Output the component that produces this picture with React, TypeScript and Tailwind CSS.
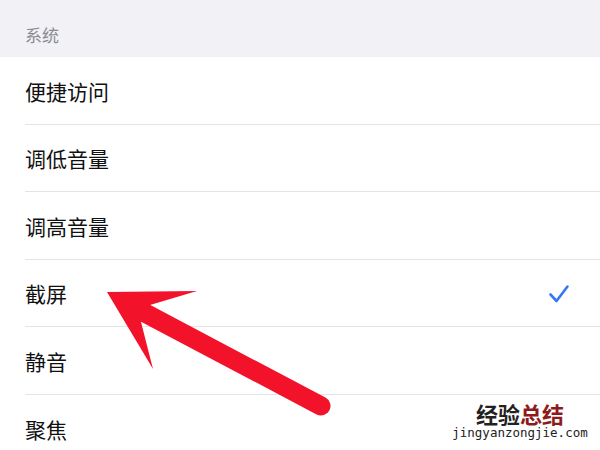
import React from "react";

const rows: { label: string; h: string; check?: boolean }[] = [
  { label: "便捷访问", h: "h-[68px]" },
  { label: "调低音量", h: "h-[67px]" },
  { label: "调高音量", h: "h-[68px]" },
  { label: "截屏", h: "h-[67px]", check: true },
  { label: "静音", h: "h-[68px]" },
  { label: "聚焦", h: "h-[67px]" },
];

export default function App() {
  return (
    <div
      className="relative w-[600px] h-[450px] overflow-hidden bg-white"
      style={{ fontFamily: '"Noto Sans CJK SC", "Noto Sans", sans-serif' }}
    >
      <div className="h-[57px] bg-[#f2f2f6] flex items-end pl-[25px] pb-[12px]">
        <span className="text-[17px] leading-[20px] text-[#8a8a8f]">系统</span>
      </div>
      <div className="flex flex-col">
        {rows.map((r, i) => (
          <div key={r.label} className="pl-[25px]">
            <div
              className={`${r.h} flex items-center justify-between pr-[32px] ${
                i < rows.length - 1 ? "border-b border-[#e4e4e8]" : ""
              }`}
            >
              <span className="text-[21px] leading-[26px] text-[#111]">{r.label}</span>
              {r.check && (
                <svg width="22" height="20" viewBox="0 0 22 20" className="mt-[2px] -mr-[2px]">
                  <path
                    d="M2.5 10.5 L8.5 17 L19.5 2.5"
                    fill="none"
                    stroke="#3478f6"
                    strokeWidth="2.6"
                    strokeLinecap="round"
                    strokeLinejoin="round"
                  />
                </svg>
              )}
            </div>
          </div>
        ))}
      </div>

      <svg
        className="absolute left-0 top-0 pointer-events-none"
        width="600"
        height="450"
        viewBox="0 0 600 450"
      >
        <line
          x1="145"
          y1="313"
          x2="321"
          y2="406"
          stroke="#f2132b"
          strokeWidth="19"
          strokeLinecap="round"
        />
        <polygon
          points="107,292 197,291 150,305 141,322 153,369"
          fill="#f2132b"
        />
      </svg>

      <div className="absolute left-[450px] top-[400px] w-[140px] flex flex-col items-center">
        <div
          className="text-[22px] leading-[26px] font-bold"
          style={{ fontFamily: '"Noto Sans CJK SC", sans-serif' }}
        >
          <span className="text-[#222]">经验</span>
          <span className="text-[#8e1b1b]">总结</span>
        </div>
        <div
          className="text-[12.5px] leading-[14px] text-[#222]"
          style={{ fontFamily: '"DejaVu Sans Mono", monospace' }}
        >
          jingyanzongjie.com
        </div>
      </div>
    </div>
  );
}
